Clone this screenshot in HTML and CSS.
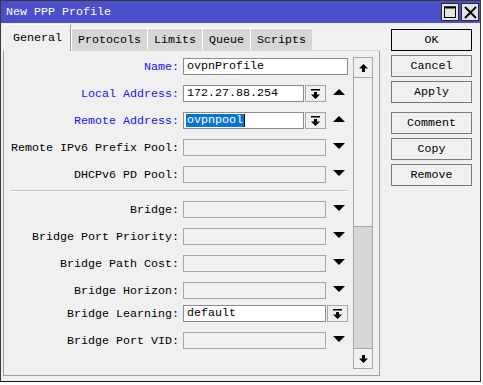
FILE: index.html
```html
<!DOCTYPE html>
<html lang="en">
<head>
    <meta charset="UTF-8">
    <title>New PPP Profile</title>
    <link rel="stylesheet" href="styles.css">
</head>
<body>

<div class="window">
    <div class="titlebar">
        <span class="title">New PPP Profile</span>
        <div class="win-btns">
            <span class="win-btn">
                <svg width="12" height="12" viewBox="0 0 12 12"><rect x="0.5" y="1" width="11" height="10.5" fill="none" stroke="#000" stroke-width="1"/><rect x="0" y="0.5" width="12" height="2" fill="#000"/></svg>
            </span>
            <span class="win-btn">
                <svg width="13" height="13" viewBox="0 0 13 13"><path d="M1 1L12 12M12 1L1 12" stroke="#000" stroke-width="2"/></svg>
            </span>
        </div>
    </div>

    <div class="main">
        <div class="left">
            <div class="tabs">
                <div class="tab active">General</div>
                <div class="tab">Protocols</div>
                <div class="tab">Limits</div>
                <div class="tab">Queue</div>
                <div class="tab">Scripts</div>
            </div>

            <div class="panel">
                <div class="form">
                    <div class="row">
                        <span class="lbl blue">Name:</span>
                        <span class="input wide">ovpnProfile</span>
                    </div>
                    <div class="row">
                        <span class="lbl blue">Local Address:</span>
                        <div class="combo">
                            <span class="input">172.27.88.254</span>
                            <span class="drop"><svg width="9" height="10" viewBox="0 0 9 10"><rect x="0" y="0" width="9" height="1.5"/><path d="M3 3H6V5.5H9L4.5 10L0 5.5H3Z"/></svg></span>
                        </div>
                        <span class="arrow up"></span>
                    </div>
                    <div class="row">
                        <span class="lbl blue">Remote Address:</span>
                        <div class="combo">
                            <span class="input"><span class="sel">ovpnpool</span><span class="caret"></span></span>
                            <span class="drop"><svg width="9" height="10" viewBox="0 0 9 10"><rect x="0" y="0" width="9" height="1.5"/><path d="M3 3H6V5.5H9L4.5 10L0 5.5H3Z"/></svg></span>
                        </div>
                        <span class="arrow up"></span>
                    </div>
                    <div class="row">
                        <span class="lbl">Remote IPv6 Prefix Pool:</span>
                        <span class="input off"></span>
                        <span class="arrow down"></span>
                    </div>
                    <div class="row tight">
                        <span class="lbl">DHCPv6 PD Pool:</span>
                        <span class="input off"></span>
                        <span class="arrow down"></span>
                    </div>

                    <div class="sep"></div>

                    <div class="row">
                        <span class="lbl">Bridge:</span>
                        <span class="input off"></span>
                        <span class="arrow down"></span>
                    </div>
                    <div class="row">
                        <span class="lbl">Bridge Port Priority:</span>
                        <span class="input off"></span>
                        <span class="arrow down"></span>
                    </div>
                    <div class="row">
                        <span class="lbl">Bridge Path Cost:</span>
                        <span class="input off"></span>
                        <span class="arrow down"></span>
                    </div>
                    <div class="row short">
                        <span class="lbl">Bridge Horizon:</span>
                        <span class="input off"></span>
                        <span class="arrow down"></span>
                    </div>
                    <div class="row">
                        <span class="lbl">Bridge Learning:</span>
                        <span class="input">default</span>
                        <span class="drop side"><svg width="9" height="10" viewBox="0 0 9 10"><rect x="0" y="0" width="9" height="1.5"/><path d="M3 3H6V5.5H9L4.5 10L0 5.5H3Z"/></svg></span>
                    </div>
                    <div class="row">
                        <span class="lbl">Bridge Port VID:</span>
                        <span class="input off"></span>
                        <span class="arrow down"></span>
                    </div>
                </div>

                <div class="scrollbar">
                    <div class="sb-btn"><svg width="9" height="8" viewBox="0 0 9 8"><path d="M4.5 0L9 4.5H6V8H3V4.5H0Z"/></svg></div>
                    <div class="sb-thumb"></div>
                    <div class="sb-track"></div>
                    <div class="sb-btn bottom"><svg width="9" height="8" viewBox="0 0 9 8"><path d="M3 0H6V3.5H9L4.5 8L0 3.5H3Z"/></svg></div>
                </div>
            </div>
        </div>

        <div class="actions">
            <button class="btn default">OK</button>
            <button class="btn">Cancel</button>
            <button class="btn">Apply</button>
            <button class="btn gap">Comment</button>
            <button class="btn">Copy</button>
            <button class="btn">Remove</button>
        </div>
    </div>
</div>

</body>
</html>
```

FILE: styles.css
```css
body {
    margin: 0;
    background-color: #fff;
    font-family: "Liberation Mono", "DejaVu Sans Mono", monospace;
    font-size: 11.67px;
    color: #000;
}
.window {
    width: 481px;
    height: 382px;
    box-sizing: border-box;
    border: 1px solid #3a3a3a;
    border-bottom-color: #111;
    background-color: #f0f0f0;
}
.titlebar {
    height: 22px;
    background-color: #4b4fcb;
    display: flex;
    align-items: center;
    justify-content: space-between;
    padding-left: 5px;
    padding-right: 1px;
}
.title {
    color: #fff;
    line-height: 22px;
}
.win-btns {
    display: flex;
    gap: 2px;
}
.win-btn {
    width: 18px;
    height: 18px;
    box-sizing: border-box;
    border: 1px solid #2a2a2a;
    background-color: #e4e4e4;
    display: flex;
    align-items: center;
    justify-content: center;
}
.main {
    display: flex;
    padding-top: 1px;
    padding-left: 2px;
}
.left {
    width: 377px;
}
.tabs {
    display: flex;
    align-items: flex-end;
    height: 26px;
    padding-left: 1px;
}
.tab {
    height: 22px;
    display: flex;
    align-items: center;
    padding: 0 6px;
    background-color: #d6d6d6;
    border-left: 1px solid #fff;
    border-top: 1px solid #fff;
    box-sizing: border-box;
}
.tab.active {
    height: 27px;
    margin-bottom: -1px;
    padding: 0 8px;
    background-color: #f0f0f0;
    border-right: 1px solid #a0a0a0;
    position: relative;
    z-index: 1;
}
.panel {
    height: 326px;
    box-sizing: border-box;
    border: 1px solid #a0a0a0;
    border-top-color: #d8d8d8;
    display: flex;
    padding: 6px 6px 6px 0;
}
.form {
    width: 349px;
    padding-top: 1px;
}
.row {
    display: grid;
    grid-template-columns: 179px 143px 1fr;
    height: 17px;
    align-items: center;
    margin-bottom: 10px;
}
.row.tight {
    margin-bottom: 7px;
}
.row.short {
    margin-bottom: 6px;
}
.lbl {
    text-align: right;
    padding-right: 4px;
    white-space: nowrap;
}
.lbl.blue {
    color: #1414f0;
}
.input {
    height: 17px;
    box-sizing: border-box;
    border: 1px solid #8c8c8c;
    background-color: #fff;
    padding-left: 3px;
    line-height: 15px;
    white-space: nowrap;
    display: flex;
    align-items: center;
}
.input.wide {
    width: 165px;
    grid-column: 2 / 4;
}
.input.off {
    background-color: #f0f0f0;
    border-color: #a6a6a6;
}
.sel {
    background-color: #0a74d6;
    color: #fff;
    padding: 0 1px;
    margin-left: -1px;
    line-height: 13px;
}
.caret {
    width: 1px;
    height: 13px;
    background-color: #000;
}
.combo {
    display: flex;
    gap: 1px;
}
.combo .input {
    width: 121px;
}
.drop {
    width: 21px;
    height: 17px;
    box-sizing: border-box;
    border: 1px solid #a6a6a6;
    background-color: #f0f0f0;
    display: flex;
    align-items: center;
    justify-content: center;
}
.drop.side {
    margin-left: 1px;
}
.arrow {
    align-self: start;
    margin-top: 4px;
    margin-left: 7px;
    width: 0;
    height: 0;
    border-left: 6px solid transparent;
    border-right: 6px solid transparent;
}
.arrow.up {
    border-bottom: 6px solid #000;
}
.arrow.down {
    border-top: 6px solid #000;
}
.sep {
    height: 0;
    border-top: 1px solid #c4c4c4;
    border-bottom: 1px solid #fafafa;
    margin: 0 5px 9px 7px;
}
.scrollbar {
    width: 20px;
    box-sizing: border-box;
    border: 1px solid #a8a8a8;
    display: flex;
    flex-direction: column;
}
.sb-btn {
    height: 19px;
    border-bottom: 1px solid #a8a8a8;
    background-color: #f0f0f0;
    display: flex;
    align-items: center;
    justify-content: center;
}
.sb-btn.bottom {
    border-bottom: none;
    border-top: 1px solid #a8a8a8;
}
.sb-thumb {
    height: 148px;
    background-color: #f0f0f0;
    border-bottom: 1px solid #a8a8a8;
}
.sb-track {
    flex: 1;
    background-color: #d6d6d6;
}
.actions {
    margin-left: 11px;
    padding-top: 5px;
    display: flex;
    flex-direction: column;
    gap: 4px;
}
.btn {
    width: 81px;
    height: 22px;
    box-sizing: border-box;
    border: 1px solid #7c7c7c;
    background-color: #f0f0f0;
    font-family: inherit;
    font-size: inherit;
    color: #000;
    padding: 0;
}
.btn.default {
    border-color: #000;
}
.btn.gap {
    margin-top: 5px;
}
```
